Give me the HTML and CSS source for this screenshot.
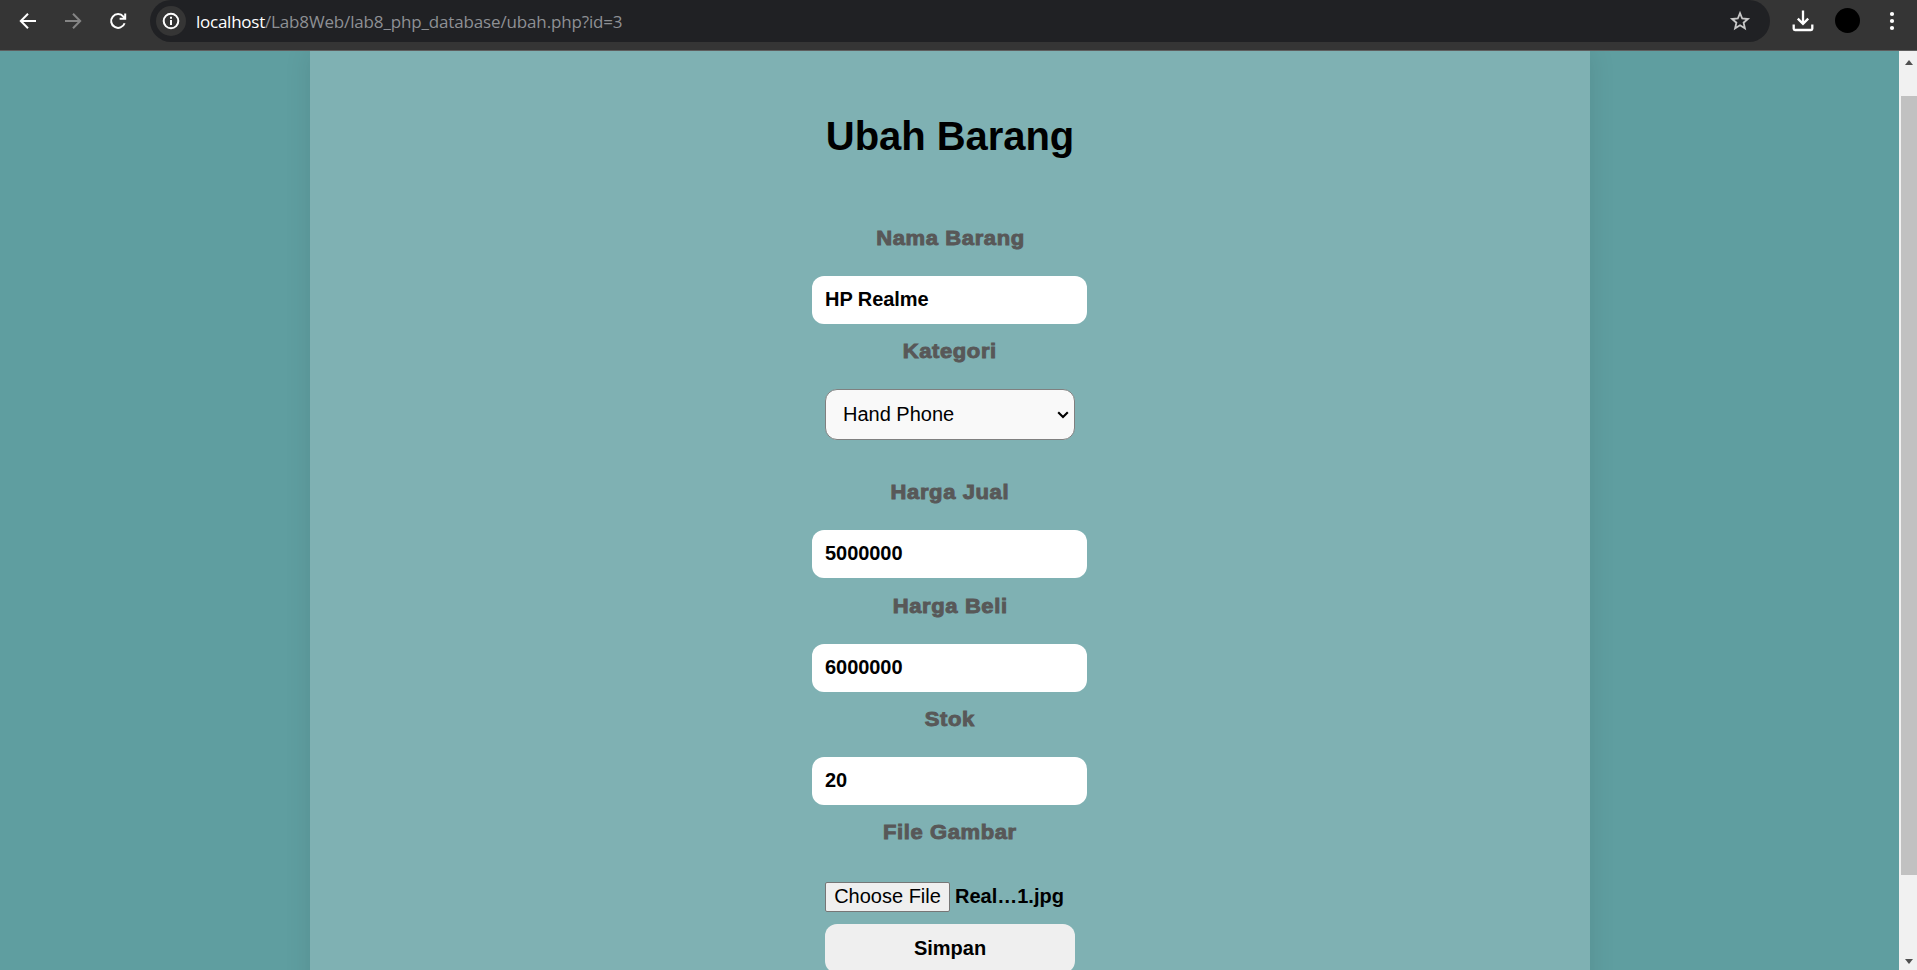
FILE: index.html
```
<!DOCTYPE html>
<html lang="id">
<head>
<meta charset="utf-8">
<title>Ubah Barang</title>
<link rel="stylesheet" href="styles.css">
</head>
<body>
<header class="toolbar">
  <div class="nav">
    <svg class="icon" viewBox="0 0 24 24"><path d="M20 12H5M12 4.7 4.8 12l7.2 7.3"/></svg>
    <svg class="icon dim" viewBox="0 0 24 24"><path d="M4 12h15M12 4.7l7.2 7.3-7.2 7.3"/></svg>
    <svg class="icon" viewBox="0 0 24 24"><path d="M18.6 14.2A6.9 6.9 0 1 1 17.4 7.6L19 9.3M19.2 4.4v5.4h-5.6"/></svg>
  </div>
  <div class="address">
    <span class="info"><svg class="icon" viewBox="0 0 24 24"><circle cx="12" cy="12" r="7.3"/><path d="M12 11v5M12 7.8v1.9"/></svg></span>
    <span class="url"><span class="host">localhost</span><span class="path">/Lab8Web/lab8_php_database/ubah.php?id=3</span></span>
    <svg class="icon star" viewBox="0 0 24 24"><path d="M12 4.2l2.2 5.3 5.7.5-4.3 3.7 1.3 5.6-4.9-3-4.9 3 1.3-5.6L4.1 10l5.7-.5z"/></svg>
  </div>
  <svg class="icon download" viewBox="0 0 24 24"><path d="M12 1.5v13M6.8 9.6l5.2 5.2 5.2-5.2M2.7 15.5v4.2q0 1.3 1.3 1.3h16q1.3 0 1.3-1.3v-4.2"/></svg>
  <span class="avatar"></span>
  <svg class="icon menu" viewBox="0 0 24 24"><circle cx="12" cy="5" r="2.1"/><circle cx="12" cy="12" r="2.1"/><circle cx="12" cy="19" r="2.1"/></svg>
</header>
<div class="viewport">
  <main class="page">
    <section class="panel">
      <h1 class="title">Ubah Barang</h1>
      <form class="form">
        <div class="field"><label class="label">Nama Barang</label><input class="input" type="text" value="HP Realme"></div>
        <div class="field field-select"><label class="label">Kategori</label>
          <div class="select"><span>Hand Phone</span><svg class="chevron" viewBox="0 0 12 8"><path d="M1.2 1.3 6 6.1l4.8-4.8"/></svg></div></div>
        <div class="field"><label class="label">Harga Jual</label><input class="input" type="text" value="5000000"></div>
        <div class="field"><label class="label">Harga Beli</label><input class="input" type="text" value="6000000"></div>
        <div class="field"><label class="label">Stok</label><input class="input" type="text" value="20"></div>
        <div class="field field-file"><label class="label">File Gambar</label>
          <div class="file"><button class="choose" type="button">Choose File</button><span class="filename">Real…1.jpg</span></div></div>
        <button class="submit" type="button">Simpan</button>
      </form>
    </section>
  </main>
  <div class="scrollbar">
    <svg class="arrow" viewBox="0 0 8 5"><path d="M0 5 4 0l4 5z"/></svg>
    <div class="thumb"></div>
    <svg class="arrow down" viewBox="0 0 8 5"><path d="M0 0h8L4 5z"/></svg>
  </div>
</div>
</body>
</html>
```
FILE: styles.css
```
* { box-sizing: border-box; }

body {
  margin: 0;
  height: 970px;
  overflow: hidden;
  display: flex;
  flex-direction: column;
  font-family: "Liberation Sans", Arial, sans-serif;
  font-size: 20px;
  color: #000;
}

/* Browser toolbar */
.toolbar {
  flex: none;
  height: 51px;
  display: flex;
  align-items: flex-start;
  background: #353535;
  border-bottom: 1px solid #5e5e5e;
}

.icon {
  flex: none;
  width: 24px;
  height: 24px;
  fill: none;
  stroke: #fff;
  stroke-width: 2;
}

.dim { stroke: #858585; }

.nav {
  width: 150px;
  height: 41px;
  padding-left: 16px;
  display: flex;
  align-items: center;
  gap: 21px;
}

.address {
  width: 1620px;
  height: 42px;
  padding: 0 18px 0 6px;
  display: flex;
  align-items: center;
  border-radius: 21px;
  background: #202124;
}

.info {
  width: 30px;
  height: 30px;
  display: flex;
  align-items: center;
  justify-content: center;
  border-radius: 50%;
  background: #353535;
}

.url {
  flex: 1;
  padding: 1px 0 0 10px;
  font-family: "Open Sans", "Noto Sans", sans-serif;
  font-size: 17px;
  line-height: 24px;
  letter-spacing: -0.15px;
  white-space: nowrap;
}

.host {
  letter-spacing: -0.25px;
  color: #fff;
}

.path { color: #8e9094; }

.star {
  stroke: #c7c7c7;
  stroke-width: 1.8;
}

.download {
  margin: 9px 0 0 21px;
  stroke-width: 2.3;
}

.avatar {
  width: 25px;
  height: 25px;
  margin: 8px 0 0 20px;
  border-radius: 50%;
  background: #000;
}

.menu {
  margin: 9px 0 0 20px;
  fill: #fff;
  stroke: none;
}

/* Page */
.viewport {
  flex: 1;
  min-height: 0;
  display: flex;
}

.page {
  flex: 1;
  overflow: hidden;
  background: #5f9ea0;
}

.panel {
  width: 1280px;
  height: 1000px;
  margin: 0 309px 0 310px;
  padding-top: 62px;
  background: #7fb1b3;
  box-shadow: 0 0 25px rgba(0, 0, 0, 0.1);
}

.title {
  margin: 0;
  font-size: 40px;
  line-height: 46px;
  letter-spacing: -0.05px;
  text-align: center;
}

.form {
  margin-top: 64px;
  display: flex;
  flex-direction: column;
  align-items: center;
}

.field {
  height: 113.3px;
  display: flex;
  flex-direction: column;
  align-items: center;
}

.field-select { height: 141px; }
.field-file { height: 102px; }

.label {
  height: 53px;
  padding-top: 1px;
  line-height: 28px;
  font-weight: bold;
  letter-spacing: 0.55px;
  color: #585858;
  -webkit-text-stroke: 0.9px #585858;
  transform: scaleX(1.1);
}

.input {
  width: 275px;
  height: 48px;
  margin-right: 1px;
  padding: 0 13px 1px;
  border: 0;
  border-radius: 12px;
  background: #fff;
  font: bold 20px "Liberation Sans", Arial, sans-serif;
  letter-spacing: -0.05px;
  color: #000;
}

.select {
  width: 250px;
  height: 51px;
  padding: 0 5px 1px 17px;
  display: flex;
  align-items: center;
  justify-content: space-between;
  border: 1px solid #808080;
  border-radius: 12px;
  background: #f9f9f9;
}

.chevron {
  width: 12px;
  height: 8px;
  margin-top: 2px;
  fill: none;
  stroke: #000;
  stroke-width: 2.1;
}

.file {
  width: 250px;
  margin-top: 12px;
  display: flex;
  align-items: center;
  gap: 5px;
  font-weight: bold;
}

.choose {
  width: 125px;
  height: 30px;
  padding: 0 0 2px;
  border: 1px solid #767676;
  border-radius: 2px;
  background: #efefef;
  font: 20px "Liberation Sans", Arial, sans-serif;
  color: #000;
}

.filename { padding-bottom: 2px; }

.submit {
  width: 250px;
  height: 49px;
  margin-top: 5px;
  padding: 0;
  border: 0;
  border-radius: 12px;
  background: #efefef;
  font: bold 20px "Liberation Sans", Arial, sans-serif;
  color: #000;
}

/* Scrollbar */
.scrollbar {
  width: 18px;
  padding: 9px 0 6px 2px;
  display: flex;
  flex-direction: column;
  background: #f1f1f1;
}

.arrow {
  width: 8px;
  height: 5px;
  margin-left: 4px;
  fill: #505050;
}

.thumb {
  height: 779px;
  margin-top: 31px;
  background: #c1c1c1;
}

.down { margin-top: auto; }
```
